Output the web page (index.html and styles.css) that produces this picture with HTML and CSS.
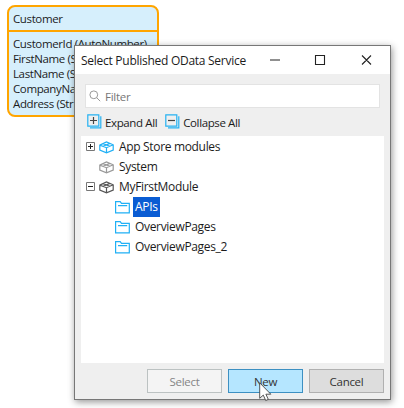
FILE: index.html
```html
<!DOCTYPE html>
<html lang="en">
<head>
<meta charset="utf-8">
<title>Select Published OData Service</title>
<link rel="stylesheet" href="styles.css">
</head>
<body>
<svg class="defs" width="0" height="0">
  <symbol id="box" viewBox="0 0 15 13">
    <path d="M.8 4.1 7.5 1l6.7 2.8v5.2L7.5 11.8.8 9zM.8 4.1l6.7 2.6 6.7-2.9M7.5 6.7v5.1M4.2 2.6l6.6 2.6M10.8 2.4 4.2 5.3"/>
  </symbol>
  <symbol id="folder" viewBox="0 0 15 13">
    <path d="M.6 11.9V.6h4.6l1.3 1.8h7.8v9.5zM3 4.7h9.2"/>
  </symbol>
</svg>
<section class="entity">
  <header class="entity-name"><span>Customer</span></header>
  <ul class="attributes">
    <li>CustomerId (AutoNumber)</li>
    <li>FirstName (String)</li>
    <li>LastName (String)</li>
    <li>CompanyName (String)</li>
    <li>Address (String)</li>
  </ul>
</section>
<main class="dialog">
  <header class="titlebar">
    <h1>Select Published OData Service</h1>
    <svg class="controls" width="104" height="12" viewBox="0 0 104 12"><path d="M1 6h10M46.5 1.5h9v9h-9zM93 1.5l9 9M102 1.5l-9 9"/></svg>
  </header>
  <div class="search">
    <svg width="12" height="12" viewBox="0 0 12 12"><circle cx="4.8" cy="4.8" r="3.9"/><path d="M7.6 7.6l3.6 3.6"/></svg>
    <span>Filter</span>
  </div>
  <div class="toolbar">
    <svg width="15" height="15" viewBox="0 0 15 15"><path class="frame" d="M.8.8h11v11.4H.8zM3 13.9h10.8V2.3"/><path class="sign" d="M3 6.5h7M6.5 3v7"/></svg>
    <span class="expand">Expand All</span>
    <svg width="15" height="15" viewBox="0 0 15 15"><path class="frame" d="M.8.8h11v11.4H.8zM3 13.9h10.8V2.3"/><path class="sign" d="M3 6.5h7"/></svg>
    <span class="collapse">Collapse All</span>
  </div>
  <div class="tree">
    <div class="row"><svg class="toggle" width="9" height="9"><path d="M.5.5h8v8h-8z"/><path class="mark" d="M2 4.5h5M4.5 2v5"/></svg><svg class="box blue"><use href="#box"/></svg><span>App Store modules</span></div>
    <div class="row"><i class="toggle"></i><svg class="box gray"><use href="#box"/></svg><span>System</span></div>
    <div class="row"><svg class="toggle" width="9" height="9"><path d="M.5.5h8v8h-8z"/><path class="mark" d="M2 4.5h5"/></svg><svg class="box dark"><use href="#box"/></svg><span>MyFirstModule</span></div>
    <div class="row child"><svg class="box blue"><use href="#folder"/></svg><span class="selected">APIs</span></div>
    <div class="row child"><svg class="box blue"><use href="#folder"/></svg><span>OverviewPages</span></div>
    <div class="row child"><svg class="box blue"><use href="#folder"/></svg><span>OverviewPages_2</span></div>
  </div>
  <footer class="buttons">
    <button class="disabled">Select</button>
    <button class="primary">New</button>
    <button>Cancel</button>
  </footer>
</main>
<svg class="cursor" width="14" height="20" viewBox="0 0 14 20"><path d="M.7.8v15.5l3.6-3.2 2.4 5.4 2.6-1.1-2.4-5.2h4.9z"/></svg>
</body>
</html>
```

FILE: styles.css
```css
* { box-sizing: border-box; }
body {
  margin: 0;
  width: 404px;
  height: 408px;
  overflow: hidden;
  background: #fff;
  color: #1c1c1c;
  font-family: "Open Sans", "Noto Sans", sans-serif;
  font-size: 11.5px;
  letter-spacing: -.38px;
}
svg { fill: none; flex: none; display: block; }
.defs { position: absolute; }
.entity {
  position: absolute;
  left: 7px;
  top: 5px;
  width: 152px;
  height: 112px;
  border: 2px solid #ffa500;
  border-radius: 8px;
  background: #d6effc;
  white-space: nowrap;
}
.entity-name {
  height: 25px;
  padding: 0 0 0 4px;
  line-height: 23px;
  border-bottom: 2px solid #ffa500;
}
.attributes {
  margin: 0;
  padding: 4px 0 0 4px;
  list-style: none;
  line-height: 15.1px;
}
.dialog {
  position: absolute;
  left: 74px;
  top: 45px;
  width: 317px;
  height: 355px;
  display: flex;
  flex-direction: column;
  border: 1px solid #777;
  background: #efefef;
  box-shadow: 1px 2px 7px rgba(0, 0, 0, .42);
  white-space: nowrap;
}
.titlebar {
  height: 28px;
  flex: none;
  display: flex;
  align-items: center;
  justify-content: space-between;
  padding: 0 17px 0 6px;
  background: #fff;
}
.titlebar h1 { margin: 1px 0 0; font-size: 12px; font-weight: 400; letter-spacing: -.27px; }
.controls { stroke: #222; stroke-width: 1.1; }
.search {
  height: 24px;
  flex: none;
  margin: 10px 10px 0 10px;
  display: flex;
  align-items: center;
  gap: 4px;
  padding: 1px 3px 0;
  border: 1px solid #e3e3e3;
  background: #fff;
  color: #777;
  letter-spacing: -.25px;
}
.search svg { stroke: #999; margin-top: -2px; }
.toolbar {
  height: 28px;
  flex: none;
  display: flex;
  align-items: center;
  padding: 0 0 1px 12px;
}
.toolbar span { margin: 2px 8px 0 3px; }
.frame { stroke: #26b2f2; stroke-width: 1.2; }
.sign { stroke: #444; stroke-width: 1.2; }
.tree {
  width: 303px;
  height: 227px;
  flex: none;
  margin-left: 6px;
  padding-top: 1px;
  background: #fff;
  font-size: 12px;
  letter-spacing: -.33px;
}
.row { height: 20px; display: flex; align-items: center; padding-left: 5px; }
.toggle { width: 9px; height: 9px; stroke: #777; margin: -1px 4px 0 0; }
.toggle .mark { stroke: #222; }
.box { width: 15px; height: 13px; margin: 0 3px 0 0; stroke-width: 1.2; }
.row span { padding: 0 2px; line-height: 20px; }
.blue { stroke: #20b0f5; }
.gray { stroke: #999; }
.dark { stroke: #555; }
.child { padding-left: 34px; }
.row .selected { background: #0a5cd3; color: #fff; }
.buttons {
  flex: 1;
  display: flex;
  justify-content: flex-end;
  gap: 6px;
  padding: 6px 6px 0 0;
}
button {
  width: 75px;
  height: 24px;
  padding: 0;
  border: 1px solid #b0b0b0;
  background: #ddd;
  color: #333;
  font: inherit;
  letter-spacing: -.3px;
}
.disabled { background: #f4f4f4; border-color: #bcc2c2; color: #858585; }
.primary { background: #b5e6ff; border-color: #3d90c2; }
.cursor { position: absolute; left: 259px; top: 382px; fill: #fff; stroke: #444; stroke-width: .9; }
```
